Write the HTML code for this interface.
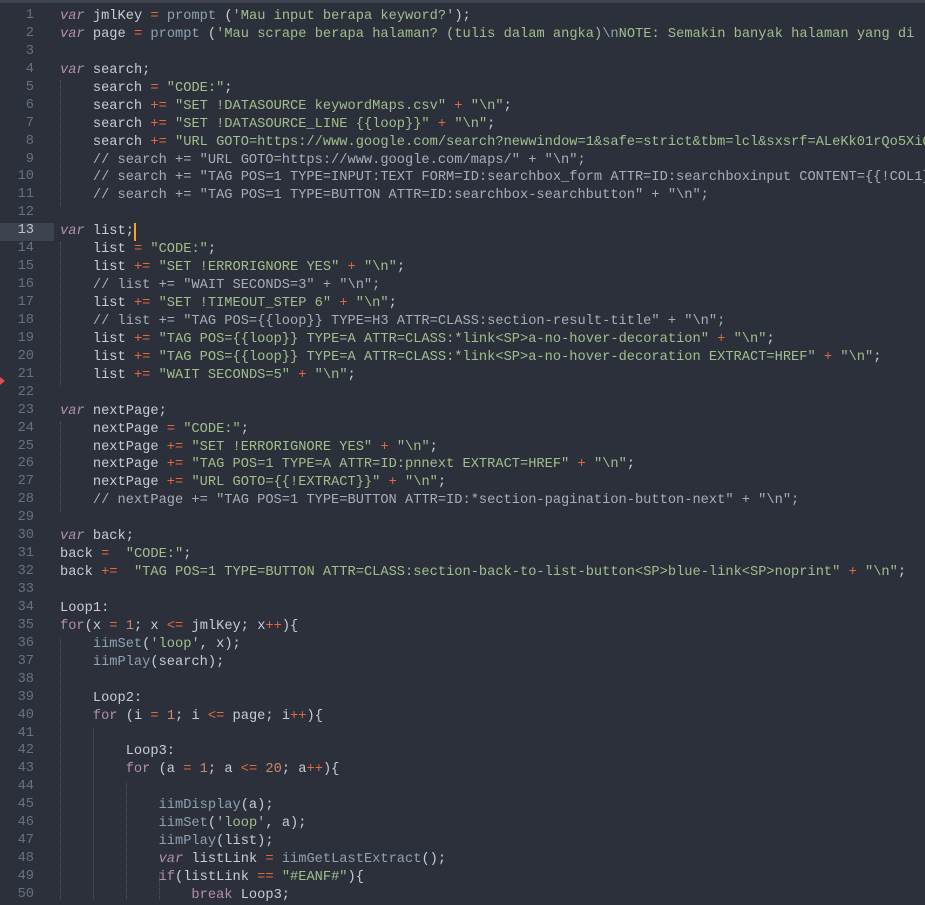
<!DOCTYPE html>
<html><head><meta charset="utf-8"><style>
html,body{margin:0;padding:0;background:#2b303b;width:925px;height:899px;overflow:hidden}
.top{position:absolute;left:0;top:0;width:925px;height:3px;background:#3e4450}
.gut{position:absolute;left:0;top:8px;width:54px}
.gut div{height:17.95px;line-height:17.95px;text-align:right;padding-right:20px;color:#65737e;font:13.7px "Liberation Mono",monospace}
.gut div.cur{background:#3d4450;color:#c0c5ce}
.code{position:absolute;left:60px;top:8px;font:13.7px "Liberation Mono",monospace;color:#c8ccd4;white-space:normal}
.code div{height:17.95px;line-height:17.95px;white-space:pre}
.k{color:#b48ead;font-style:italic}.w{color:#b48ead}
.o{color:#e5673d}.s{color:#a3be8c}.f{color:#8fa1b3}.n{color:#d08770}.c{color:#a7adba}
.cursor{display:inline-block;width:2px;height:18px;background:#f5a623;vertical-align:top}
.g{position:absolute;width:0;border-left:1px dotted #4f5764}
.mk{position:absolute;left:0;top:377px;width:0;height:0;border-top:4px solid transparent;border-bottom:4px solid transparent;border-left:5px solid #e04e4e}
</style></head><body>
<div class="top"></div>
<div class="gut"><div>1</div><div>2</div><div>3</div><div>4</div><div>5</div><div>6</div><div>7</div><div>8</div><div>9</div><div>10</div><div>11</div><div>12</div><div class="cur">13</div><div>14</div><div>15</div><div>16</div><div>17</div><div>18</div><div>19</div><div>20</div><div>21</div><div>22</div><div>23</div><div>24</div><div>25</div><div>26</div><div>27</div><div>28</div><div>29</div><div>30</div><div>31</div><div>32</div><div>33</div><div>34</div><div>35</div><div>36</div><div>37</div><div>38</div><div>39</div><div>40</div><div>41</div><div>42</div><div>43</div><div>44</div><div>45</div><div>46</div><div>47</div><div>48</div><div>49</div><div>50</div></div>
<div class="mk"></div>
<div class="g" style="left:60px;top:80px;height:126px"></div>
<div class="g" style="left:60px;top:242px;height:144px"></div>
<div class="g" style="left:60px;top:422px;height:90px"></div>
<div class="g" style="left:60px;top:638px;height:261px"></div>
<div class="g" style="left:93px;top:728px;height:171px"></div>
<div class="g" style="left:126px;top:782px;height:117px"></div>
<div class="g" style="left:159px;top:872px;height:27px"></div>
<div class="code"><div><span class="k">var</span> jmlKey <span class="o">=</span> <span class="f">prompt</span> (<span class="s">'Mau input berapa keyword?'</span>);</div><div><span class="k">var</span> page <span class="o">=</span> <span class="f">prompt</span> (<span class="s">'Mau scrape berapa halaman? (tulis dalam angka)</span><span class="f">\n</span><span class="s">NOTE: Semakin banyak halaman yang di</span></div><div> </div><div><span class="k">var</span> search;</div><div>    search <span class="o">=</span> <span class="s">"CODE:"</span>;</div><div>    search <span class="o">+=</span> <span class="s">"SET !DATASOURCE keywordMaps.csv"</span> <span class="o">+</span> <span class="s">"\n"</span>;</div><div>    search <span class="o">+=</span> <span class="s">"SET !DATASOURCE_LINE {{loop}}"</span> <span class="o">+</span> <span class="s">"\n"</span>;</div><div>    search <span class="o">+=</span> <span class="s">"URL GOTO=https://www.google.com/search?newwindow=1&amp;safe=strict&amp;tbm=lcl&amp;sxsrf=ALeKk01rQo5XiQ"</span></div><div><span class="c">    // search += "URL GOTO=https://www.google.com/maps/" + "\n";</span></div><div><span class="c">    // search += "TAG POS=1 TYPE=INPUT:TEXT FORM=ID:searchbox_form ATTR=ID:searchboxinput CONTENT={{!COL1}}"</span></div><div><span class="c">    // search += "TAG POS=1 TYPE=BUTTON ATTR=ID:searchbox-searchbutton" + "\n";</span></div><div> </div><div><span class="k">var</span> list;<span class="cursor"></span></div><div>    list <span class="o">=</span> <span class="s">"CODE:"</span>;</div><div>    list <span class="o">+=</span> <span class="s">"SET !ERRORIGNORE YES"</span> <span class="o">+</span> <span class="s">"\n"</span>;</div><div><span class="c">    // list += "WAIT SECONDS=3" + "\n";</span></div><div>    list <span class="o">+=</span> <span class="s">"SET !TIMEOUT_STEP 6"</span> <span class="o">+</span> <span class="s">"\n"</span>;</div><div><span class="c">    // list += "TAG POS={{loop}} TYPE=H3 ATTR=CLASS:section-result-title" + "\n";</span></div><div>    list <span class="o">+=</span> <span class="s">"TAG POS={{loop}} TYPE=A ATTR=CLASS:*link&lt;SP&gt;a-no-hover-decoration"</span> <span class="o">+</span> <span class="s">"\n"</span>;</div><div>    list <span class="o">+=</span> <span class="s">"TAG POS={{loop}} TYPE=A ATTR=CLASS:*link&lt;SP&gt;a-no-hover-decoration EXTRACT=HREF"</span> <span class="o">+</span> <span class="s">"\n"</span>;</div><div>    list <span class="o">+=</span> <span class="s">"WAIT SECONDS=5"</span> <span class="o">+</span> <span class="s">"\n"</span>;</div><div> </div><div><span class="k">var</span> nextPage;</div><div>    nextPage <span class="o">=</span> <span class="s">"CODE:"</span>;</div><div>    nextPage <span class="o">+=</span> <span class="s">"SET !ERRORIGNORE YES"</span> <span class="o">+</span> <span class="s">"\n"</span>;</div><div>    nextPage <span class="o">+=</span> <span class="s">"TAG POS=1 TYPE=A ATTR=ID:pnnext EXTRACT=HREF"</span> <span class="o">+</span> <span class="s">"\n"</span>;</div><div>    nextPage <span class="o">+=</span> <span class="s">"URL GOTO={{!EXTRACT}}"</span> <span class="o">+</span> <span class="s">"\n"</span>;</div><div><span class="c">    // nextPage += "TAG POS=1 TYPE=BUTTON ATTR=ID:*section-pagination-button-next" + "\n";</span></div><div> </div><div><span class="k">var</span> back;</div><div>back <span class="o">=</span>  <span class="s">"CODE:"</span>;</div><div>back <span class="o">+=</span>  <span class="s">"TAG POS=1 TYPE=BUTTON ATTR=CLASS:section-back-to-list-button&lt;SP&gt;blue-link&lt;SP&gt;noprint"</span> <span class="o">+</span> <span class="s">"\n"</span>;</div><div> </div><div>Loop1:</div><div><span class="w">for</span>(x <span class="o">=</span> <span class="n">1</span>; x <span class="o">&lt;=</span> jmlKey; x<span class="o">++</span>){</div><div>    <span class="f">iimSet</span>(<span class="s">'loop'</span>, x);</div><div>    <span class="f">iimPlay</span>(search);</div><div> </div><div>    Loop2:</div><div>    <span class="w">for</span> (i <span class="o">=</span> <span class="n">1</span>; i <span class="o">&lt;=</span> page; i<span class="o">++</span>){</div><div> </div><div>        Loop3:</div><div>        <span class="w">for</span> (a <span class="o">=</span> <span class="n">1</span>; a <span class="o">&lt;=</span> <span class="n">20</span>; a<span class="o">++</span>){</div><div> </div><div>            <span class="f">iimDisplay</span>(a);</div><div>            <span class="f">iimSet</span>(<span class="s">'loop'</span>, a);</div><div>            <span class="f">iimPlay</span>(list);</div><div>            <span class="k">var</span> listLink <span class="o">=</span> <span class="f">iimGetLastExtract</span>();</div><div>            <span class="w">if</span>(listLink <span class="o">==</span> <span class="s">"#EANF#"</span>){</div><div>                <span class="w">break</span> Loop3;</div></div>
</body></html>
